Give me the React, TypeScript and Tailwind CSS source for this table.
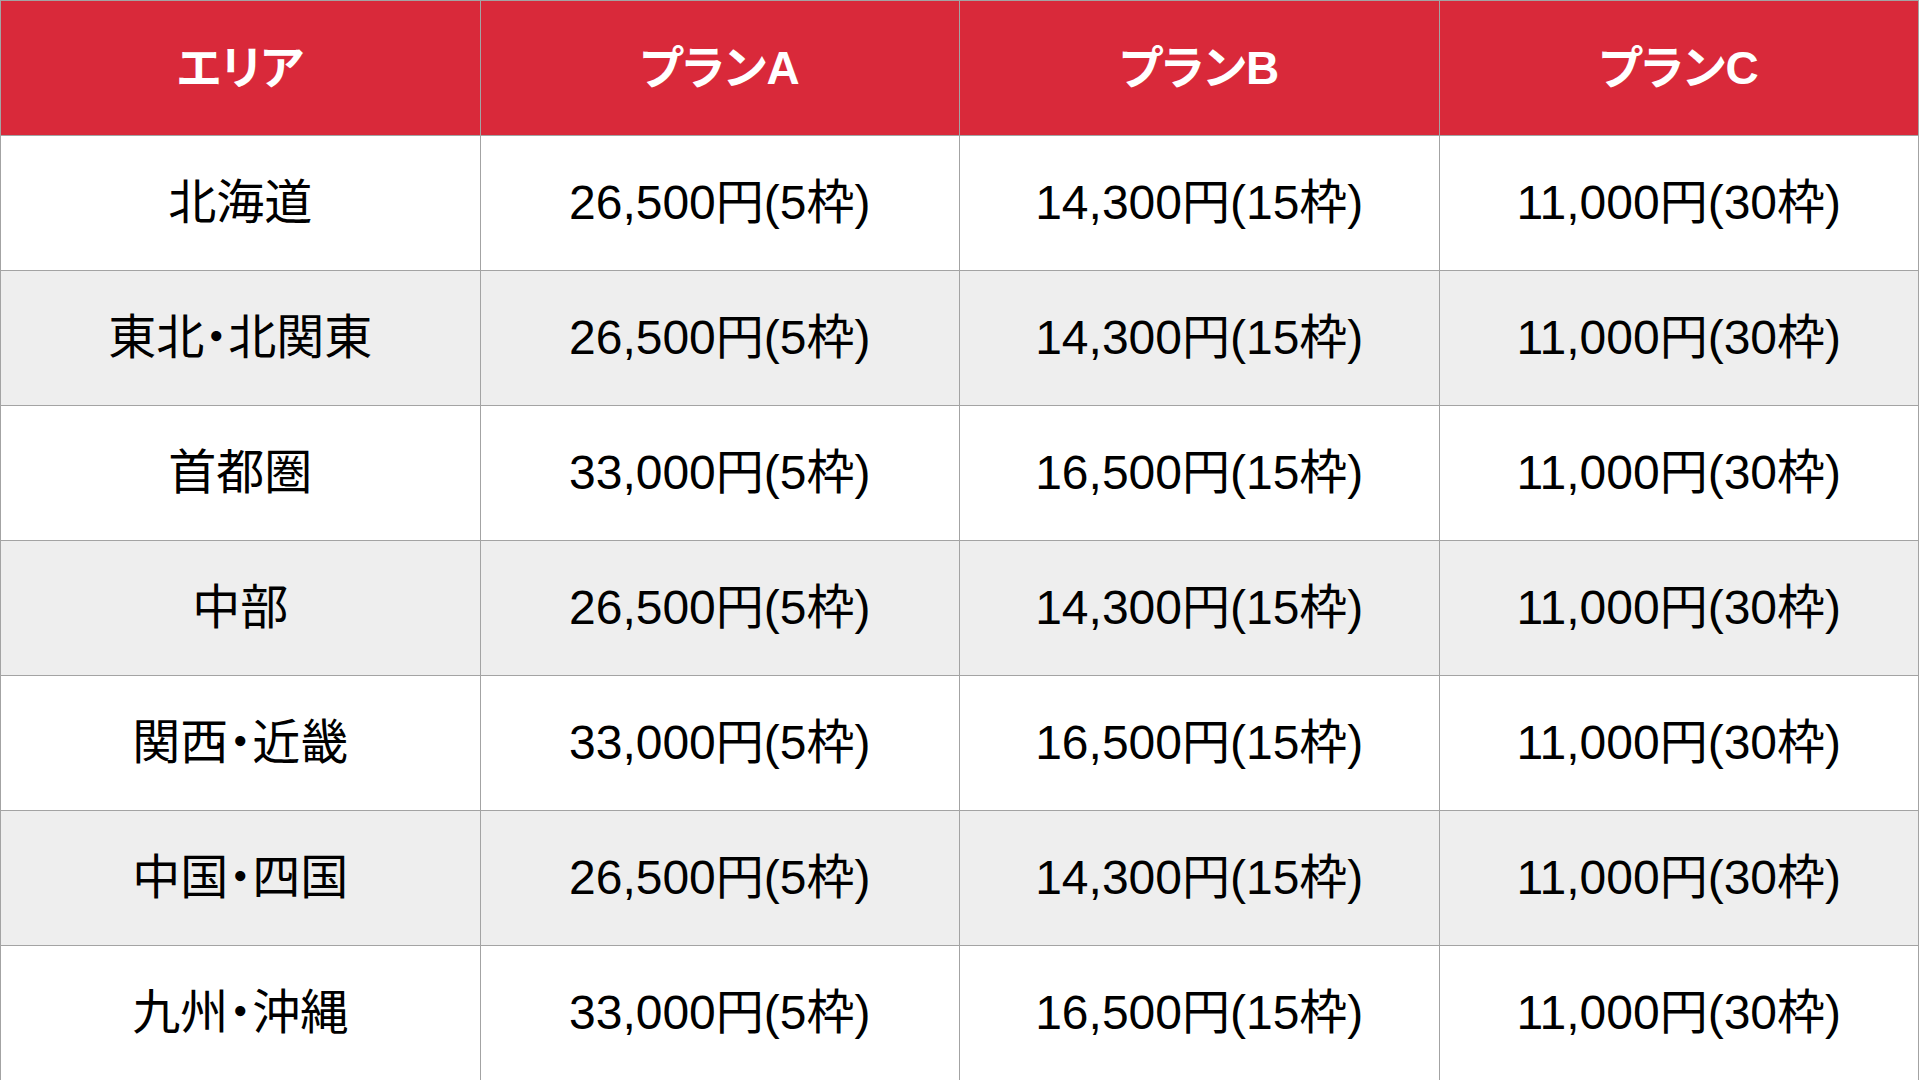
import React from 'react';

const headers = ['エリア', 'プランA', 'プランB', 'プランC'];

const rows: string[][] = [
  ['北海道', '26,500円(5枠)', '14,300円(15枠)', '11,000円(30枠)'],
  ['東北・北関東', '26,500円(5枠)', '14,300円(15枠)', '11,000円(30枠)'],
  ['首都圏', '33,000円(5枠)', '16,500円(15枠)', '11,000円(30枠)'],
  ['中部', '26,500円(5枠)', '14,300円(15枠)', '11,000円(30枠)'],
  ['関西・近畿', '33,000円(5枠)', '16,500円(15枠)', '11,000円(30枠)'],
  ['中国・四国', '26,500円(5枠)', '14,300円(15枠)', '11,000円(30枠)'],
  ['九州・沖縄', '33,000円(5枠)', '16,500円(15枠)', '11,000円(30枠)'],
];

const font = "font-['Liberation_Sans','Noto_Sans_CJK_JP',sans-serif] [font-feature-settings:'palt']";

export default function App() {
  return (
    <div className={`w-[1919px] h-[1080px] overflow-hidden bg-white ${font}`}>
      <table className="w-full table-fixed border-collapse">
        <thead>
          <tr className="h-[135px] bg-[#d9293a]">
            {headers.map((h) => (
              <th
                key={h}
                className="border border-[#a3a3a3] text-center align-middle text-[46px] font-bold text-white"
              >
                {h}
              </th>
            ))}
          </tr>
        </thead>
        <tbody>
          {rows.map((r, i) => (
            <tr key={r[0]} className={`h-[135px] ${i % 2 === 1 ? 'bg-[#eeeeee]' : 'bg-white'}`}>
              {r.map((c, j) => (
                <td
                  key={j}
                  className="border border-[#a3a3a3] text-center align-middle text-[48px] text-black"
                >
                  {c}
                </td>
              ))}
            </tr>
          ))}
        </tbody>
      </table>
    </div>
  );
}
